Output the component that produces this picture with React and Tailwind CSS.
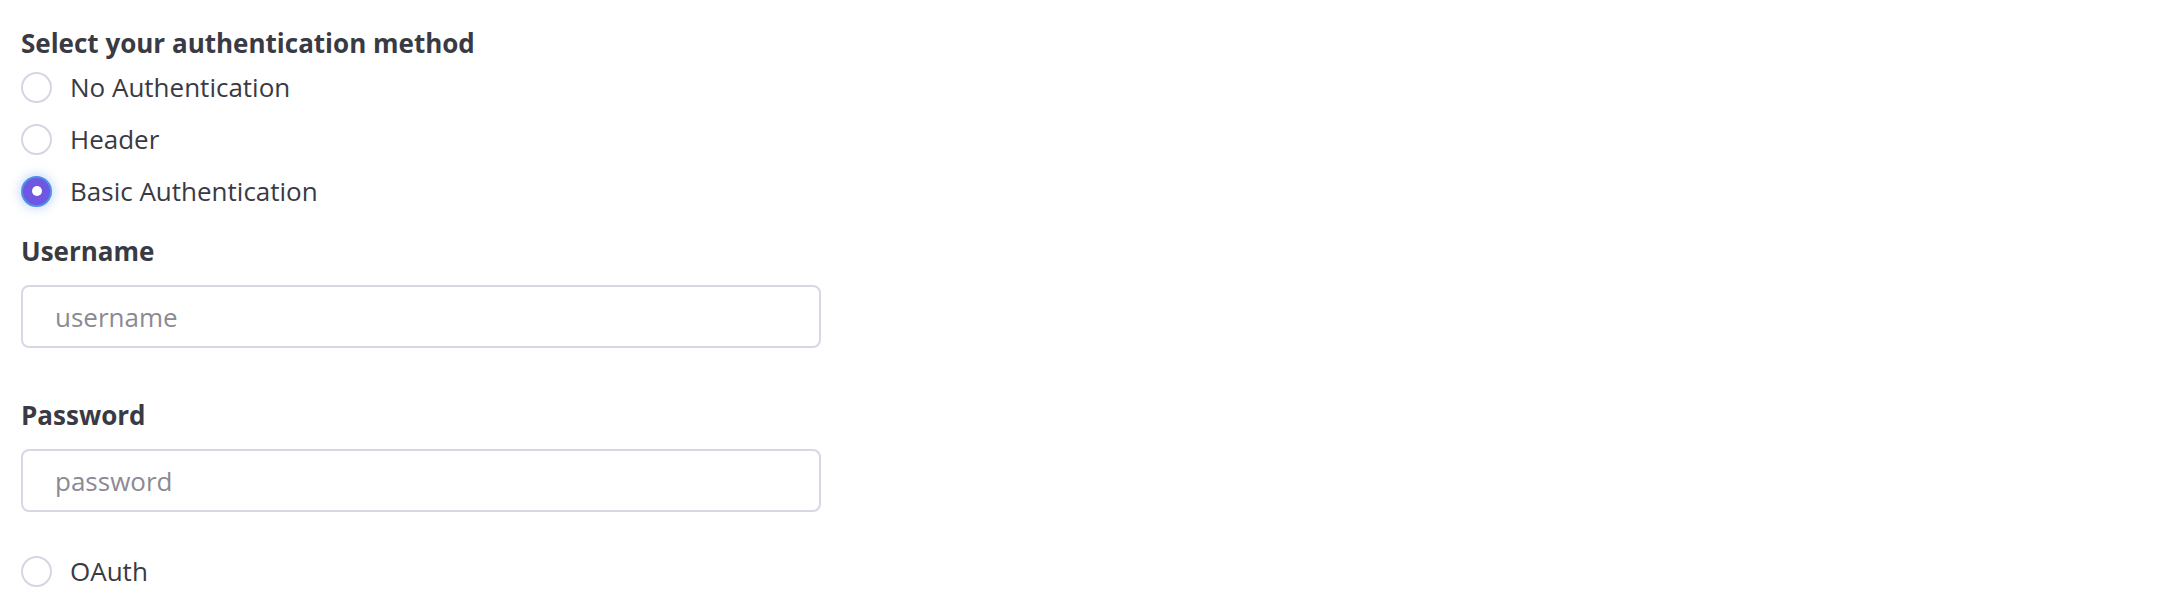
import { useState } from 'react'

const methods = [
  { id: 'none', label: 'No Authentication' },
  { id: 'header', label: 'Header' },
  { id: 'basic', label: 'Basic Authentication' },
]

function Radio({ checked, label, onClick }) {
  return (
    <label onClick={onClick} className="flex items-center h-[52px] cursor-pointer select-none">
      {checked ? (
        <span className="w-[31px] h-[31px] rounded-full bg-[#6e58e2] border-2 border-[#4f8fe6] shadow-[0_0_10px_3px_rgba(80,140,230,0.25)] flex items-center justify-center shrink-0">
          <span className="w-[10px] h-[10px] rounded-full bg-white" />
        </span>
      ) : (
        <span className="w-[31px] h-[31px] rounded-full bg-white border-2 border-[#d7d5e4] shrink-0" />
      )}
      <span className="ml-[18px] text-[26px] leading-[36px] text-[#393a43]">{label}</span>
    </label>
  )
}

function Field({ label, placeholder, type }) {
  return (
    <div className="flex flex-col gap-4">
      <div className="text-[26px] leading-[36px] font-bold text-[#393a43]">{label}</div>
      <input
        type={type}
        placeholder={placeholder}
        className="block w-[800px] h-[63px] rounded-lg border-2 border-[#d9d7e5] bg-white pl-[32px] text-[26px] text-[#393a43] placeholder:text-[#8b8a93] outline-none"
      />
    </div>
  )
}

export default function App() {
  const [method, setMethod] = useState('basic')

  return (
    <div className="min-h-screen bg-white pl-[21px] pt-[25px] font-['Open_Sans',sans-serif]">
      <h2 className="text-[26px] leading-[36px] font-bold text-[#393a43]">Select your authentication method</h2>
      {methods.map(m => (
        <Radio key={m.id} label={m.label} checked={method === m.id} onClick={() => setMethod(m.id)} />
      ))}
      {method === 'basic' && (
        <div className="flex flex-col gap-[49px] pt-4 pb-[33px]">
          <Field label="Username" placeholder="username" type="text" />
          <Field label="Password" placeholder="password" type="password" />
        </div>
      )}
      <Radio label="OAuth" checked={method === 'oauth'} onClick={() => setMethod('oauth')} />
    </div>
  )
}
